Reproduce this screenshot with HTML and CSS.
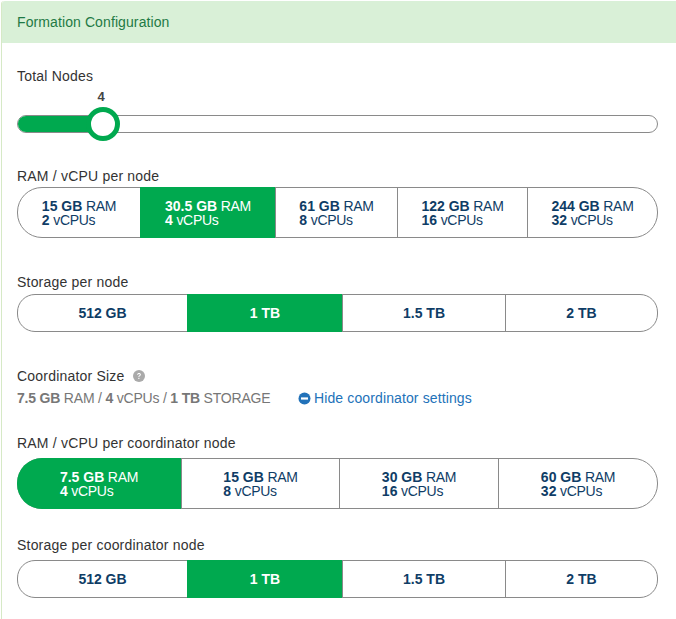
FILE: index.html
```html
<!DOCTYPE html>
<html lang="en">
<head>
  <meta charset="UTF-8">
  <title>Formation Configuration</title>
  <link rel="stylesheet" href="styles.css">
</head>
<body>

  <div class="panel">
    <div class="panel-heading">Formation Configuration</div>

    <div class="panel-body">
      <div class="field-label nodes-label">Total Nodes</div>
      <div class="slider">
        <div class="slider-fill"></div>
        <div class="slider-value">4</div>
        <div class="slider-handle"></div>
      </div>

      <!-- RAM per node -->
      <div class="field-label ram-label">RAM / vCPU per node</div>
      <div class="segments tall cols-ram">
        <div class="segment"><span><b>15 GB</b> RAM<br><b>2</b> vCPUs</span></div>
        <div class="segment active"><span><b>30.5 GB</b> RAM<br><b>4</b> vCPUs</span></div>
        <div class="segment"><span><b>61 GB</b> RAM<br><b>8</b> vCPUs</span></div>
        <div class="segment"><span><b>122 GB</b> RAM<br><b>16</b> vCPUs</span></div>
        <div class="segment"><span><b>244 GB</b> RAM<br><b>32</b> vCPUs</span></div>
      </div>

      <!-- Storage per node -->
      <div class="field-label storage-label">Storage per node</div>
      <div class="segments short cols-storage">
        <div class="segment"><b>512 GB</b></div>
        <div class="segment active"><b>1 TB</b></div>
        <div class="segment"><b>1.5 TB</b></div>
        <div class="segment"><b>2 TB</b></div>
      </div>

      <!-- Coordinator -->
      <div class="field-label coordinator-label">
        Coordinator Size
        <svg class="help-icon" width="12" height="12" viewBox="0 0 12 12">
          <circle cx="6" cy="6" r="6" fill="#aaaaaa"/>
          <path d="M4.1 4.7C4.2 3.5 5 3 6 3c1.1 0 1.9.6 1.9 1.6 0 .8-.5 1.1-1 1.5-.4.3-.6.5-.6 1H5.4c0-.9.3-1.3.8-1.7.4-.3.7-.5.7-.8 0-.4-.4-.7-.9-.7s-.9.3-1 .8z" fill="#fff"/>
          <rect x="5.3" y="7.8" width="1.1" height="1.2" fill="#fff"/>
        </svg>
      </div>
      <div class="coordinator-summary">
        <span class="summary-text"><b>7.5 GB</b> RAM / <b>4</b> vCPUs / <b>1 TB</b> STORAGE</span>
        <a class="toggle-link" href="#">
          <svg width="13" height="13" viewBox="0 0 13 13">
            <circle cx="6.5" cy="6.5" r="6" fill="#2272b9"/>
            <rect x="3" y="5.4" width="7" height="2.2" fill="#fff"/>
          </svg>
          Hide coordinator settings
        </a>
      </div>

      <div class="field-label coord-ram-label">RAM / vCPU per coordinator node</div>
      <div class="segments tall cols-coord">
        <div class="segment active"><span><b>7.5 GB</b> RAM<br><b>4</b> vCPUs</span></div>
        <div class="segment"><span><b>15 GB</b> RAM<br><b>8</b> vCPUs</span></div>
        <div class="segment"><span><b>30 GB</b> RAM<br><b>16</b> vCPUs</span></div>
        <div class="segment"><span><b>60 GB</b> RAM<br><b>32</b> vCPUs</span></div>
      </div>

      <div class="field-label coord-storage-label">Storage per coordinator node</div>
      <div class="segments short cols-storage">
        <div class="segment"><b>512 GB</b></div>
        <div class="segment active"><b>1 TB</b></div>
        <div class="segment"><b>1.5 TB</b></div>
        <div class="segment"><b>2 TB</b></div>
      </div>
    </div>
  </div>

</body>
</html>
```

FILE: styles.css
```css
body {
  margin: 0;
  padding: 1px 0 0 1px;
  height: 618px;
  overflow: hidden;
  background: #ffffff;
  font-family: "Liberation Sans", Arial, sans-serif;
  font-size: 14px;
  color: #333333;
}

.panel {
  width: 700px;
  height: 640px;
  border-left: 1px solid #d6e9c6;
  border-top-left-radius: 3px;
}

.panel-heading {
  height: 42px;
  line-height: 42px;
  padding-left: 15px;
  background: #d9f0d7;
  color: #1f7a45;
  font-size: 14px;
  letter-spacing: 0.1px;
  border-top-left-radius: 3px;
}

.panel-body {
  width: 641px;
  padding-left: 15px;
}

.field-label {
  height: 20px;
  line-height: 20px;
  font-size: 14px;
  letter-spacing: 0.2px;
}

.nodes-label { margin-top: 23px; }
.ram-label { margin-top: 33px; }
.storage-label { margin-top: 34px; }
.coordinator-label { margin-top: 34px; }
.coord-ram-label { margin-top: 25px; }
.coord-storage-label { margin-top: 26px; }

.help-icon {
  margin-left: 4px;
  vertical-align: -1px;
}

/* slider */
.slider {
  position: relative;
  height: 16px;
  margin-top: 29px;
  border: 1px solid #8a8a8a;
  border-radius: 9px;
}

.slider-fill {
  width: 84px;
  height: 100%;
  background: #00a94f;
  border-radius: 8px 0 0 8px;
}

.slider-value {
  position: absolute;
  left: 73px;
  top: -26px;
  width: 20px;
  text-align: center;
  font-size: 13px;
  font-weight: bold;
  line-height: 14px;
  color: #444444;
}

.slider-handle {
  position: absolute;
  left: 68px;
  top: -9px;
  width: 24px;
  height: 24px;
  background: #ffffff;
  border: 5px solid #00a94f;
  border-radius: 50%;
}

/* segmented buttons */
.segments {
  display: grid;
  border: 1px solid #8a8a8a;
  color: #0f3d66;
}

.tall {
  height: 49px;
  margin-top: 1px;
  border-radius: 25px;
}

.short {
  height: 36px;
  margin-top: 2px;
  border-radius: 18px;
}

.cols-ram { grid-template-columns: 122px 135px 122px 130px 1fr; }
.cols-storage { grid-template-columns: 169px 155px 163px 1fr; }
.cols-coord { grid-template-columns: 163px 158px 159px 1fr; }

.coord-ram-label + .segments { margin-top: 5px; }
.coord-storage-label + .segments { margin-top: 5px; }

.segment {
  display: flex;
  align-items: center;
  justify-content: center;
  border-left: 1px solid #8a8a8a;
  font-size: 14px;
}

.segment:first-child {
  border-left: none;
}

.segment span {
  line-height: 14px;
  letter-spacing: -0.3px;
}

.segment b {
  letter-spacing: 0;
}

.segment.active {
  margin: -1px 0;
  background: #00a94f;
  border-left-color: #00a94f;
  color: #ffffff;
}

.segment.active:first-child {
  margin-left: -1px;
  border-radius: 25px 0 0 25px;
}

.coordinator-summary {
  display: flex;
  align-items: center;
  height: 20px;
  margin-top: 2px;
}

.summary-text {
  color: #777777;
  width: 281px;
  letter-spacing: -0.2px;
}

.toggle-link {
  display: flex;
  align-items: center;
  gap: 3px;
  color: #2272b9;
  text-decoration: none;
  letter-spacing: 0.12px;
}
```
